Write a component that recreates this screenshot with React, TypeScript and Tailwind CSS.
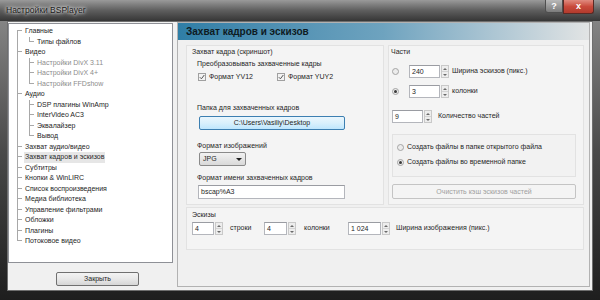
import React from "react";

type TreeItem = { label: string; children?: { label: string; disabled?: boolean }[]; selected?: boolean };

const tree: TreeItem[] = [
  { label: "Главные", children: [{ label: "Типы файлов" }] },
  {
    label: "Видео",
    children: [
      { label: "Настройки DivX 3.11", disabled: true },
      { label: "Настройки DivX 4+", disabled: true },
      { label: "Настройки FFDshow", disabled: true },
    ],
  },
  {
    label: "Аудио",
    children: [{ label: "DSP плагины WinAmp" }, { label: "InterVideo AC3" }, { label: "Эквалайзер" }, { label: "Вывод" }],
  },
  { label: "Захват аудио/видео" },
  { label: "Захват кадров и эскизов", selected: true },
  { label: "Субтитры" },
  { label: "Кнопки & WinLIRC" },
  { label: "Список воспроизведения" },
  { label: "Медиа библиотека" },
  { label: "Управление фильтрами" },
  { label: "Обложки" },
  { label: "Плагины" },
  { label: "Потоковое видео" },
];

const Branch = ({ first, last }: { first?: boolean; last?: boolean }) => (
  <div className="w-[5px] h-full flex flex-col shrink-0">
    <div className={`h-1/2 border-b border-[#a8a8a8] ${first ? "" : "border-l"}`} />
    <div className={`h-1/2 border-[#a8a8a8] ${last ? "" : "border-l"}`} />
  </div>
);

const Tree = () => {
  const rows: React.ReactNode[] = [];
  tree.forEach((item, i) => {
    const lastTop = i === tree.length - 1;
    rows.push(
      <div key={item.label} className="flex h-[10.5px] items-stretch">
        <div className="w-[8px] shrink-0" />
        <Branch first={i === 0} last={lastTop} />
        <div className="w-[2px] shrink-0" />
        <span className={`leading-[10.5px] px-[1px] ${item.selected ? "bg-[#e6e6e6]" : ""}`}>{item.label}</span>
      </div>
    );
    item.children?.forEach((c, j) => {
      rows.push(
        <div key={c.label} className="flex h-[10.5px] items-stretch">
          <div className="w-[8px] shrink-0" />
          <div className="w-[12px] shrink-0 border-l border-[#a8a8a8]" />
          <Branch last={j === item.children!.length - 1} />
          <div className="w-[3px] shrink-0" />
          <span className={`leading-[10.5px] ${c.disabled ? "text-[#8c8c8c]" : ""}`}>{c.label}</span>
        </div>
      );
    });
  });
  return <div className="pt-[2px]">{rows}</div>;
};

const Spin = () => (
  <div className="w-[8px] h-[13px] flex flex-col border border-[#c9c9c9] bg-[#ededed] shrink-0">
    <div className="flex-1 flex items-center justify-center border-b border-[#d4d4d4]">
      <div className="w-0 h-0 border-l-[2px] border-r-[2px] border-b-[2px] border-l-transparent border-r-transparent border-b-[#6a6a6a]" />
    </div>
    <div className="flex-1 flex items-center justify-center">
      <div className="w-0 h-0 border-l-[2px] border-r-[2px] border-t-[2px] border-l-transparent border-r-transparent border-t-[#6a6a6a]" />
    </div>
  </div>
);

const Field = ({ value, w }: { value: string; w: string }) => (
  <div className={`${w} h-[13px] bg-white border border-[#b4b6bc] border-t-[#9a9ca2] pl-[2px] leading-[11px] shrink-0`}>{value}</div>
);

const Radio = ({ on }: { on?: boolean }) => (
  <div className="w-[7px] h-[7px] rounded-full border border-[#a4a4a4] bg-[#ececec] flex items-center justify-center shrink-0">
    {on && <div className="w-[3px] h-[3px] rounded-full bg-[#3a3a3a]" />}
  </div>
);

const Check = () => (
  <div className="w-[8px] h-[8px] border border-[#a0a0a0] bg-[#f3f3f3] flex items-center justify-center shrink-0">
    <svg width="6" height="6" viewBox="0 0 6 6">
      <path d="M0.8 3.2 L2.4 4.8 L5.3 1" stroke="#555" strokeWidth="1" fill="none" />
    </svg>
  </div>
);

export default function App() {
  return (
    <div className="w-[600px] h-[300px] flex flex-col overflow-hidden bg-gradient-to-b from-[#8e8e8e] via-[#4a4a4a] to-[#1e1e1e] font-['Liberation_Sans',Arial,sans-serif] text-[7px] text-[#262626]">
      {/* title bar */}
      <div className="h-[21px] flex justify-between shrink-0 bg-gradient-to-b from-[#9a9a9a] via-[#5e5e5e] to-[#363636]">
        <div className="pl-[6px] pt-[4px] text-[8.5px] text-[#1a1a1a] [text-shadow:0_0_5px_#fff,0_0_3px_#fff]">Настройки BSPlayer</div>
        <div className="flex items-start pr-[6px]">
          <div className="w-[18px] h-[13px] border border-[#4f4f4f] border-t-0 rounded-bl-[3px] bg-gradient-to-b from-[#b8b8b8] to-[#7c7c7c] text-white text-[9px] font-bold leading-[13px] text-center">?</div>
          <div className="w-[31px] h-[14px] border border-[#5a2a25] border-t-0 rounded-br-[3px] bg-gradient-to-b from-[#e08a7f] via-[#c94a3c] to-[#b23a2c] text-white text-[9px] font-bold leading-[13px] text-center">x</div>
        </div>
      </div>

      {/* client area */}
      <div className="flex mx-[7px] h-[270px] bg-[#f0f0f0] border border-[#6e6e6e] shrink-0">
        <div className="w-[165px] flex flex-col shrink-0">
          <div className="h-[240px] mt-[1px] bg-white border border-[#8e9096]">
            <Tree />
          </div>
          <div className="mt-[9px] ml-[48px] w-[83px] h-[14px] border border-[#707070] rounded-[2px] bg-gradient-to-b from-[#f3f3f3] via-[#e8e8e8] to-[#d6d6d6] text-center leading-[12px]">
            Закрыть
          </div>
        </div>

        <div className="ml-[4px] w-[413px] h-[265px] border border-[#b2b2b2] bg-[#f0f0f0] flex flex-col">
          <div className="h-[17px] shrink-0 bg-gradient-to-r from-[#2f7ea6] via-[#6ea3bf] to-[#e2e4e4] pl-[8px] text-[10px] font-bold leading-[17px] text-[#0e1a22]">
            Захват кадров и эскизов
          </div>

          <div className="flex gap-[4px] mt-[5px] pl-[8px]">
            {/* left group */}
            <div className="w-[198px] h-[160px] border border-[#e2e2e2] bg-[#f4f4f4] flex flex-col pl-[5px]">
              <div className="mt-[1px] leading-[10px]">Захват кадра (скриншот)</div>
              <div className="pl-[5px] flex flex-col">
                <div className="mt-[2px] leading-[10px]">Преобразовывать захваченные кадры</div>
                <div className="mt-[3px] h-[10px] flex items-center pl-[1px]">
                  <Check />
                  <span className="ml-[3px] w-[68px] shrink-0">Формат YV12</span>
                  <Check />
                  <span className="ml-[3px]">Формат YUY2</span>
                </div>
                <div className="mt-[21px] leading-[10px]">Папка для захваченных кадров</div>
                <div className="mt-[3px] ml-[2px] w-[146px] h-[14px] border border-[#3c7fb1] rounded-[2px] bg-gradient-to-b from-[#eaf6fd] via-[#d9f0fc] to-[#bee6fd] text-center leading-[12px]">
                  C:\Users\Vasiliy\Desktop
                </div>
                <div className="mt-[11px] leading-[10px]">Формат изображений</div>
                <div className="mt-[1px] ml-[2px] w-[47px] h-[14px] border border-[#8a8a8a] rounded-[2px] bg-gradient-to-b from-[#f2f2f2] to-[#d9d9d9] flex items-center justify-between px-[3px]">
                  <span className="leading-[12px]">JPG</span>
                  <div className="w-0 h-0 border-l-[3px] border-r-[3px] border-t-[3px] border-l-transparent border-r-transparent border-t-[#222]" />
                </div>
                <div className="mt-[7px] leading-[10px]">Формат имени захваченных кадров</div>
                <div className="mt-[2px] ml-[1px] w-[147px] h-[14px] bg-white border border-[#b4b6bc] border-t-[#9a9ca2] pl-[2px] leading-[12px]">bscap%A3</div>
              </div>
            </div>

            {/* right group */}
            <div className="w-[196px] h-[160px] border border-[#e2e2e2] bg-[#f4f4f4] flex flex-col pl-[2px]">
              <div className="mt-[1px] leading-[10px]">Части</div>
              <div className="mt-[8px] flex items-center h-[13px]">
                <div className="ml-[1px]"><Radio /></div>
                <div className="ml-[10px]"><Field value="240" w="w-[31px]" /></div>
                <div className="ml-[1px]"><Spin /></div>
                <span className="ml-[3px]">Ширина эскизов (пикс.)</span>
              </div>
              <div className="mt-[7px] flex items-center h-[13px]">
                <div className="ml-[1px]"><Radio on /></div>
                <div className="ml-[10px]"><Field value="3" w="w-[31px]" /></div>
                <div className="ml-[1px]"><Spin /></div>
                <span className="ml-[3px]">колонки</span>
              </div>
              <div className="mt-[12px] flex items-center h-[13px]">
                <div className="ml-[1px]"><Field value="9" w="w-[31px]" /></div>
                <div className="ml-[1px]"><Spin /></div>
                <span className="ml-[6px]">Количество частей</span>
              </div>
              <div className="mt-[11px] ml-[1px] w-[184px] h-[43px] border border-[#e2e2e2] bg-[#f2f2f2] flex flex-col pl-[4px] pt-[9px] gap-[8px]">
                <div className="flex items-center h-[7px]">
                  <Radio />
                  <span className="ml-[3px]">Создать файлы в папке открытого файла</span>
                </div>
                <div className="flex items-center h-[7px]">
                  <Radio on />
                  <span className="ml-[3px]">Создать файлы во временной папке</span>
                </div>
              </div>
              <div className="mt-[7px] ml-[1px] w-[184px] h-[15px] border border-[#c4c4c4] rounded-[2px] bg-[#f4f4f4] text-center leading-[13px] text-[#a0a0a0]">
                Очистить кэш эскизов частей
              </div>
            </div>
          </div>

          {/* bottom group */}
          <div className="mt-[2px] ml-[8px] w-[398px] h-[43px] border border-[#e2e2e2] bg-[#f4f4f4] flex flex-col pl-[5px]">
            <div className="mt-[2px] leading-[10px]">Эскизы</div>
            <div className="mt-[2px] flex items-center h-[13px]">
              <Field value="4" w="w-[22px]" />
              <div className="ml-[1px]"><Spin /></div>
              <span className="ml-[7px] w-[34px] shrink-0">строки</span>
              <Field value="4" w="w-[23px]" />
              <div className="ml-[1px]"><Spin /></div>
              <span className="ml-[8px] w-[44px] shrink-0">колонки</span>
              <Field value="1 024" w="w-[33px]" />
              <div className="ml-[1px]"><Spin /></div>
              <span className="ml-[6px]">Ширина изображения (пикс.)</span>
            </div>
          </div>
        </div>
      </div>
    </div>
  );
}
